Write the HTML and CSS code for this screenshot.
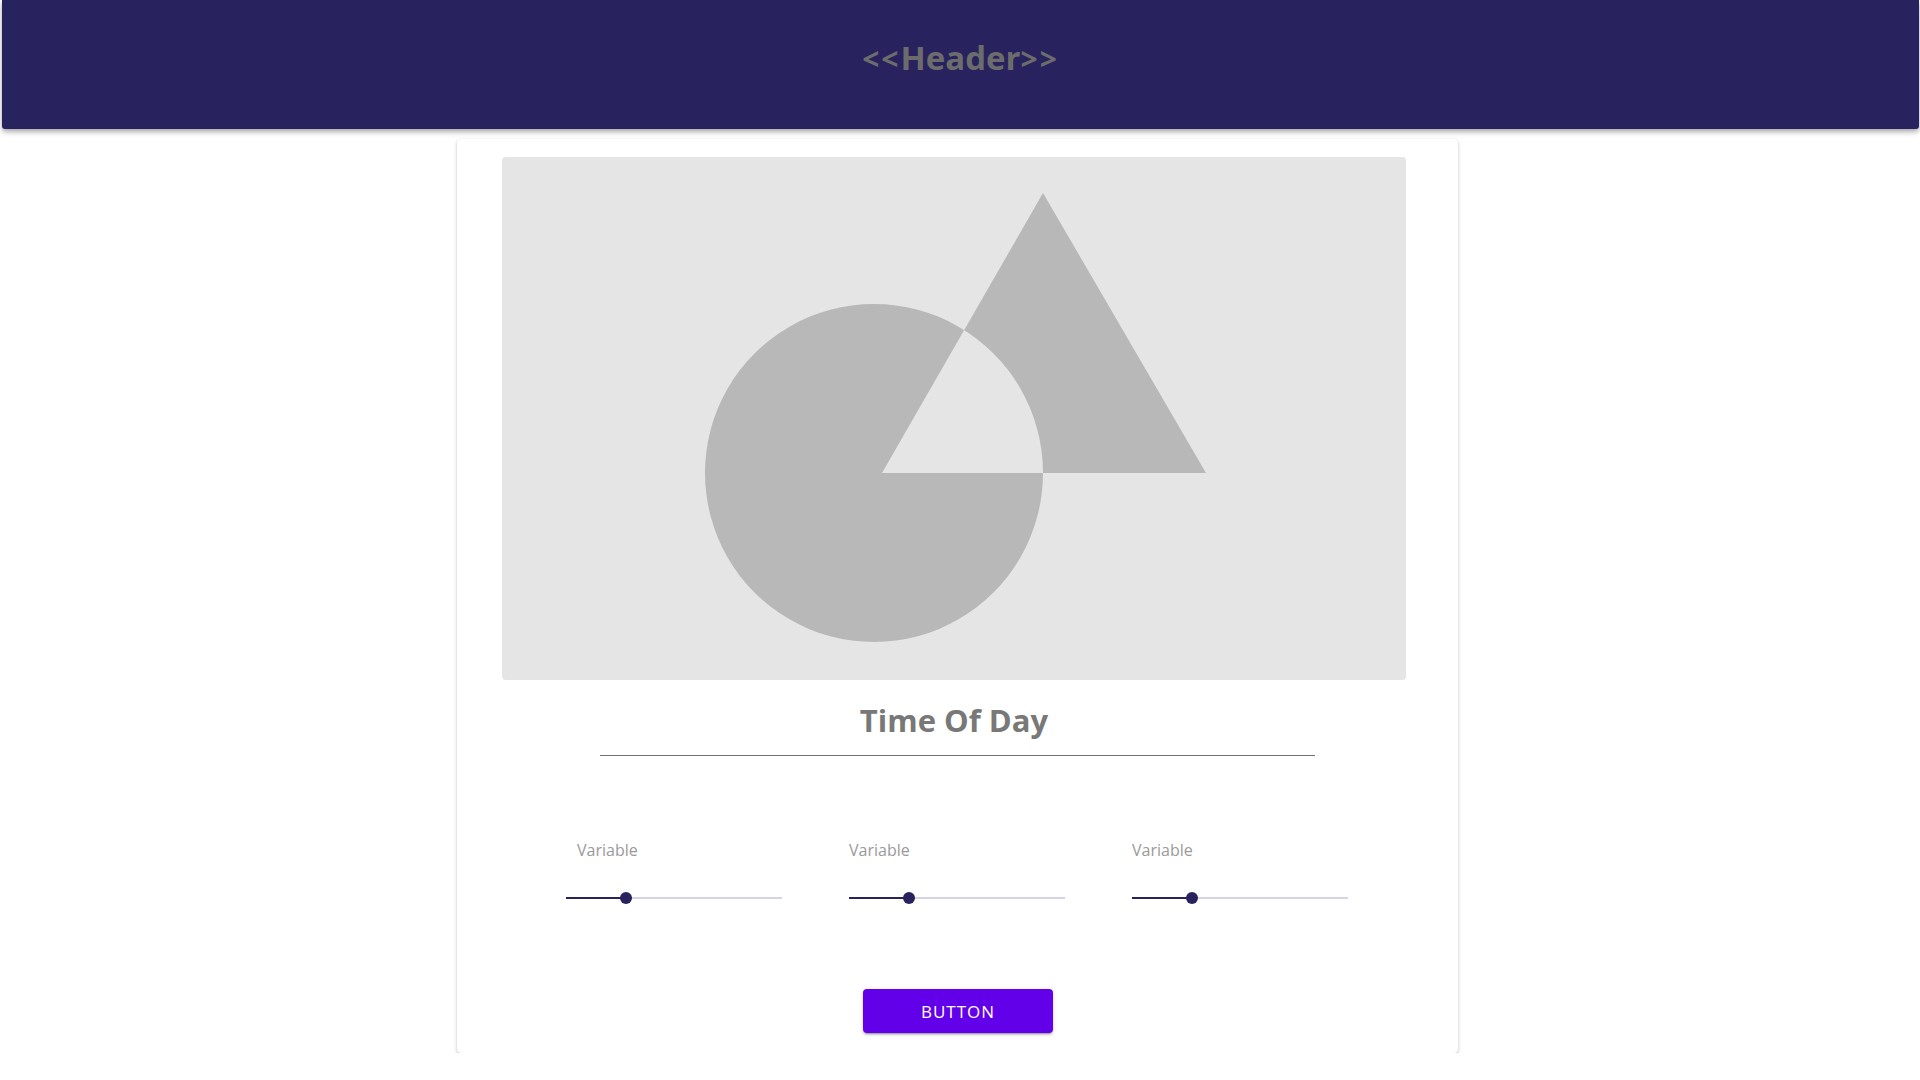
FILE: index.html
```html
<!DOCTYPE html>
<html lang="en">
<head>
<meta charset="utf-8">
<title>Time Of Day</title>
<link rel="stylesheet" href="styles.css">
</head>
<body>
<header class="app-header">
  <h1 class="app-header__title"><span class="app-header__bracket">&lt;&lt;</span>Header<span class="app-header__bracket">&gt;&gt;</span></h1>
</header>
<main class="page">
  <section class="card">
    <div class="card__media">
      <svg class="card__media-svg" width="904" height="523" viewBox="0 0 904 523" xmlns="http://www.w3.org/2000/svg">
        <path fill="#b8b8b8" fill-rule="evenodd" d="M372 147 A169 169 0 1 1 371.99 147 Z M541 36 L704 316 L380 316 Z"/>
      </svg>
    </div>
    <h2 class="card__title">Time Of Day</h2>
    <div class="card__rule"></div>
    <div class="controls">
      <div class="control">
        <div class="control__label control__label--first">Variable</div>
        <div class="slider">
          <div class="slider__track"></div>
          <div class="slider__fill" style="width:60px"></div>
          <div class="slider__thumb" style="left:60px"></div>
        </div>
      </div>
      <div class="control">
        <div class="control__label">Variable</div>
        <div class="slider">
          <div class="slider__track"></div>
          <div class="slider__fill" style="width:60px"></div>
          <div class="slider__thumb" style="left:60px"></div>
        </div>
      </div>
      <div class="control">
        <div class="control__label">Variable</div>
        <div class="slider">
          <div class="slider__track"></div>
          <div class="slider__fill" style="width:60px"></div>
          <div class="slider__thumb" style="left:60px"></div>
        </div>
      </div>
    </div>
    <div class="actions">
      <button class="btn" type="button">BUTTON</button>
    </div>
  </section>
</main>
</body>
</html>
```

FILE: styles.css
```css
* { box-sizing: border-box; }

html, body {
  margin: 0;
  padding: 0;
  background: #ffffff;
  font-family: "Open Sans", "Noto Sans", "DejaVu Sans", sans-serif;
}

.app-header {
  height: 129px;
  margin: 0 1px 0 2px;
  padding-top: 41px;
  background: #28235e;
  border-radius: 0 0 3px 3px;
  box-shadow: 0 2px 4px -1px rgba(0,0,0,0.2), 0 4px 5px 0 rgba(0,0,0,0.14), 0 1px 10px 0 rgba(0,0,0,0.12);
  position: relative;
  z-index: 1;
}

.app-header__title {
  margin: 0;
  text-align: center;
  font-size: 33px;
  line-height: 33px;
  font-weight: 700;
  color: #6c6c6c;
}

.app-header__bracket {
  letter-spacing: 2px;
  font-size: 30px;
}

.page {
  display: flex;
  justify-content: center;
  padding: 10px 5px 0 0;
}

.card {
  width: 1001px;
  padding: 18px 52px 20px 45px;
  background: #fff;
  border-radius: 4px;
  box-shadow: 0 2px 4px 0 rgba(0,0,0,0.16), 0 1px 2px 0 rgba(0,0,0,0.10), 0 0 2px 0 rgba(0,0,0,0.06);
}

.card__media {
  width: 904px;
  height: 523px;
  background: #e5e5e5;
  border-radius: 4px;
  overflow: hidden;
}

.card__media-svg { display: block; }

.card__title {
  margin: 24px 0 0;
  text-align: center;
  font-size: 31px;
  line-height: 32px;
  font-weight: 700;
  color: #787878;
}

.card__rule {
  height: 1px;
  margin: 19px 91px 0 98px;
  background: #707070;
}

.controls {
  display: grid;
  grid-template-columns: repeat(3, 283px);
  margin-top: 84px;
  padding-left: 64px;
}

.control__label {
  font-size: 16px;
  line-height: 20px;
  color: #9a9a9a;
}

.control__label--first { padding-left: 11px; }

.slider {
  position: relative;
  width: 216px;
  height: 24px;
  margin-top: 26px;
}

.slider__track {
  position: absolute;
  left: 0;
  right: 0;
  top: 11px;
  height: 2px;
  background: #d6d4e4;
}

.slider__fill {
  position: absolute;
  left: 0;
  top: 11px;
  height: 2px;
  background: #28235e;
}

.slider__thumb {
  position: absolute;
  top: 6px;
  width: 12px;
  height: 12px;
  margin-left: -6px;
  border-radius: 50%;
  background: #28235e;
}

.actions {
  display: flex;
  justify-content: center;
  margin-top: 79px;
  padding-left: 8px;
}

.btn {
  width: 190px;
  height: 44px;
  border: 0;
  border-radius: 4px;
  background: #6200ea;
  color: #fff;
  font-family: "Open Sans", "Noto Sans", sans-serif;
  font-size: 17px;
  letter-spacing: 1px;
  box-shadow: 0 3px 1px -2px rgba(0,0,0,0.2), 0 2px 2px 0 rgba(0,0,0,0.14), 0 1px 5px 0 rgba(0,0,0,0.12);
  cursor: pointer;
}
```
